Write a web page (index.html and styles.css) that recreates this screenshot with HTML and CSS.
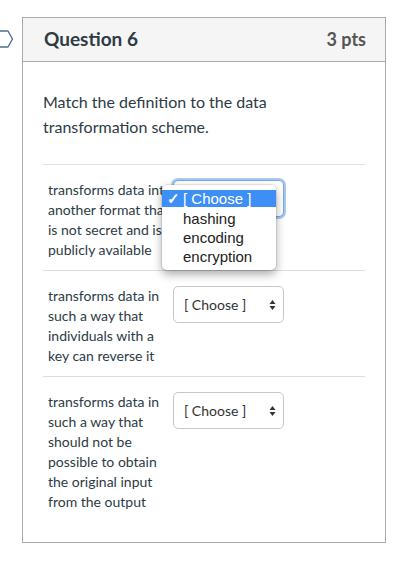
FILE: index.html
```html
<!DOCTYPE html>
<html lang="en">
<head>
    <meta charset="UTF-8">
    <meta name="viewport" content="width=device-width, initial-scale=1.0">
    <title>Question 6</title>
    <link rel="stylesheet" href="styles.css">
</head>
<body>

<div class="quiz">
    <!-- Flag marker -->
    <svg class="flag" width="14" height="18" viewBox="0 0 14 18">
        <path d="M-4 1 H8 L12.5 9 L8 17 H-4" fill="none" stroke="#4f6f8f" stroke-width="1.4" stroke-linejoin="round"/>
    </svg>

    <div class="question">
        <div class="question-header">
            <span class="question-name">Question 6</span>
            <span class="question-points">3 pts</span>
        </div>

        <div class="question-body">
            <p class="question-text">Match the definition to the data transformation scheme.</p>

            <!-- Answer rows -->
            <div class="answer-row">
                <div class="answer-label">transforms data into another format that is not secret and is publicly available</div>
                <div class="select-wrap">
                    <div class="select focused">
                        <span>[ Choose ]</span>
                        <svg class="arrows" width="7" height="12" viewBox="0 0 7 12">
                            <path d="M3.5 1 L6.5 5 H0.5 Z M3.5 11 L6.5 7 H0.5 Z" fill="#333"/>
                        </svg>
                    </div>
                    <div class="dropdown">
                        <div class="option selected"><span class="check">✓</span>[ Choose ]</div>
                        <div class="option">hashing</div>
                        <div class="option">encoding</div>
                        <div class="option">encryption</div>
                    </div>
                </div>
            </div>

            <div class="answer-row">
                <div class="answer-label">transforms data in such a way that individuals with a key can reverse it</div>
                <div class="select-wrap">
                    <div class="select">
                        <span>[ Choose ]</span>
                        <svg class="arrows" width="7" height="12" viewBox="0 0 7 12">
                            <path d="M3.5 1 L6.5 5 H0.5 Z M3.5 11 L6.5 7 H0.5 Z" fill="#333"/>
                        </svg>
                    </div>
                </div>
            </div>

            <div class="answer-row last">
                <div class="answer-label">transforms data in such a way that should not be possible to obtain the original input from the output</div>
                <div class="select-wrap">
                    <div class="select">
                        <span>[ Choose ]</span>
                        <svg class="arrows" width="7" height="12" viewBox="0 0 7 12">
                            <path d="M3.5 1 L6.5 5 H0.5 Z M3.5 11 L6.5 7 H0.5 Z" fill="#333"/>
                        </svg>
                    </div>
                </div>
            </div>
        </div>
    </div>
</div>

</body>
</html>
```

FILE: styles.css
```css
/* Global Styles */
body {
    font-family: 'Lato', 'Liberation Sans', sans-serif;
    background-color: #FFFFFF;
    margin: 0;
    padding: 0;
    color: #2d3b45;
}
.quiz {
    display: flex;
    align-items: flex-start;
    padding-top: 17px;
}
.flag {
    margin-top: 13px;
    margin-right: 8px;
    flex-shrink: 0;
}

/* Question Card */
.question {
    width: 362px;
    border: 1px solid #aaaaaa;
}
.question-header {
    display: flex;
    justify-content: space-between;
    align-items: center;
    height: 44px;
    padding: 0 19px 2px 21px;
    box-sizing: border-box;
    background-color: #f5f5f5;
    border-bottom: 1px solid #aaaaaa;
}
.question-name {
    font-size: 19px;
    font-weight: bold;
    color: #2d3b45;
}
.question-points {
    font-size: 18px;
    font-weight: bold;
    color: #555;
}
.question-body {
    padding: 27px 20px 21px 20px;
}
.question-text {
    font-size: 16px;
    line-height: 25px;
    margin: 0 0 25px 0;
}

/* Answer Rows */
.answer-row {
    display: flex;
    align-items: flex-start;
    border-top: 1px solid #dddddd;
    padding: 15px 0 10px 5px;
}
.answer-row.last {
    padding-bottom: 9px;
}
.answer-label {
    width: 125px;
    flex-shrink: 0;
    font-size: 14px;
    line-height: 20px;
    color: #2d3b45;
}
.select-wrap {
    position: relative;
}
.select {
    display: flex;
    justify-content: space-between;
    align-items: center;
    box-sizing: border-box;
    width: 111px;
    height: 37px;
    padding: 0 7px 0 10px;
    border: 1px solid #c7c7c7;
    border-radius: 5px;
    background-color: #FFF;
    font-size: 14px;
    color: #333;
}
.select.focused {
    border-color: #7aa7e0;
    box-shadow: 0 0 0 2px #a9c8f0;
}

/* Open dropdown menu */
.dropdown {
    position: absolute;
    top: 5px;
    left: -11px;
    width: 114px;
    padding: 5px 0 4px 0;
    background-color: #FFF;
    border-radius: 5px;
    box-shadow: 0 4px 10px rgba(0, 0, 0, 0.35), 0 0 0 1px rgba(0, 0, 0, 0.08);
    font-family: 'Liberation Sans', 'Helvetica', sans-serif;
    font-size: 15px;
}
.option {
    height: 19px;
    line-height: 19px;
    padding-left: 21px;
    color: #222;
    position: relative;
}
.option.selected {
    background-color: #3d8ef5;
    color: #FFF;
    height: 17px;
    line-height: 17px;
    margin-bottom: 2px;
}
.check {
    position: absolute;
    left: 5px;
    font-weight: bold;
}
```
